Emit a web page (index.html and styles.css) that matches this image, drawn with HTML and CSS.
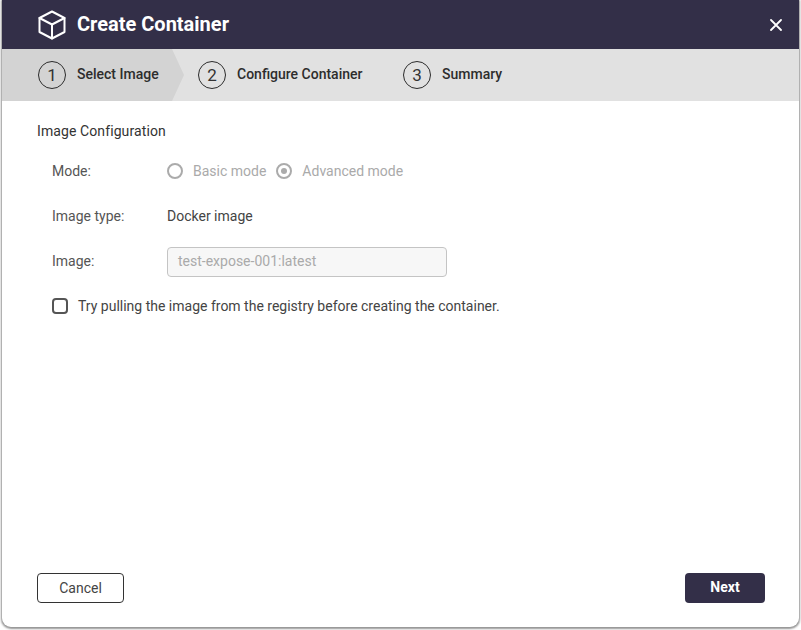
FILE: index.html
```html
<!DOCTYPE html>
<html lang="en">
<head>
<meta charset="utf-8">
<title>Create Container</title>
<link rel="stylesheet" href="styles.css">
</head>
<body>
<div class="dialog">
  <header class="titlebar">
    <svg class="cube" width="30" height="30" viewBox="0 0 30 30" fill="none" stroke="#fff" stroke-width="2" stroke-linejoin="round" stroke-linecap="round">
      <path d="M15 1.5 L27.5 8 V22 L15 28.5 L2.5 22 V8 Z"/>
      <path d="M2.5 8 L15 14.5 L27.5 8 M15 14.5 V28.5"/>
    </svg>
    <h1 class="title">Create Container</h1>
    <svg class="close" width="12" height="12" viewBox="0 0 12 12" stroke="#fff" stroke-width="1.8" stroke-linecap="round">
      <path d="M1 1 L11 11 M11 1 L1 11"/>
    </svg>
  </header>
  <nav class="steps">
    <div class="step step-active"><span class="num">1</span><span class="step-label">Select Image</span></div>
    <div class="step step-two"><span class="num">2</span><span class="step-label">Configure Container</span></div>
    <div class="step step-three"><span class="num">3</span><span class="step-label">Summary</span></div>
  </nav>
  <main class="content">
    <h2 class="section">Image Configuration</h2>
    <div class="form">
      <div class="row row-mode">
        <span class="label">Mode:</span>
        <span class="radio"></span><span class="muted basic">Basic mode</span>
        <span class="radio radio-on"></span><span class="muted">Advanced mode</span>
      </div>
      <div class="row row-type">
        <span class="label">Image type:</span>
        <span class="value">Docker image</span>
      </div>
      <div class="row row-image">
        <span class="label">Image:</span>
        <div class="input">test-expose-001:latest</div>
      </div>
      <div class="row row-check">
        <span class="checkbox"></span>
        <span class="value">Try pulling the image from the registry before creating the container.</span>
      </div>
    </div>
  </main>
  <footer class="actions">
    <button class="btn btn-cancel">Cancel</button>
    <button class="btn btn-next">Next</button>
  </footer>
</div>
</body>
</html>
```

FILE: styles.css
```css
* { box-sizing: border-box; }
html, body { margin: 0; height: 100%; background: #fff; overflow: hidden; }
body { font-family: Roboto, "Liberation Sans", sans-serif; font-size: 14px; color: #444; }

.dialog {
  width: 797px;
  height: 627px;
  margin-left: 2px;
  display: flex;
  flex-direction: column;
  background: #fff;
  border-radius: 0 0 9px 9px;
  box-shadow: 0 1px 2px 1px rgba(0,0,0,.42);
  overflow: hidden;
}

.titlebar {
  height: 49px;
  flex: none;
  display: flex;
  align-items: center;
  background: #332f48;
  padding: 0 17px 0 35px;
}
.cube { flex: none; }
.title { margin: 0 0 2px 10px; font-size: 20px; line-height: 24px; font-weight: 700; color: #fff; flex: 1; }

.steps {
  height: 52px;
  flex: none;
  display: flex;
  align-items: center;
  background: #e1e1e1;
  color: #2d2d2d;
}
.step {
  height: 100%;
  display: flex;
  align-items: center;
  gap: 11px;
  font-weight: 500;
  font-size: 14px;
}
.step-label { margin-bottom: 2px; }
.step-active {
  width: 182px;
  padding-left: 36px;
  background: #d3d3d3;
  clip-path: polygon(0 0, 170px 0, 182px 50%, 170px 100%, 0 100%);
}
.step-two { margin-left: 14px; width: 205px; }
.num {
  width: 28px;
  height: 28px;
  flex: none;
  display: flex;
  align-items: center;
  justify-content: center;
  padding-bottom: 1px;
  border: 1.5px solid #2b2b2b;
  border-radius: 50%;
  font-size: 17px;
  font-weight: 400;
  color: #333;
}

.content { flex: 1; padding: 21px 35px 0; }
.section { margin: 0; font-size: 14px; font-weight: 400; line-height: 18px; color: #333; letter-spacing: .1px; }
.form { padding-left: 15px; }
.row { display: flex; align-items: center; height: 20px; }
.row-mode { margin-top: 21px; }
.row-type { margin-top: 25px; }
.row-image { margin-top: 21px; height: 30px; }
.row-image .label { margin-bottom: 2px; }
.row-check { margin-top: 19px; }
.label { width: 115px; flex: none; color: #555; }
.value { color: #444; }
.muted { color: #aaa; }
.basic { margin-right: 10px; }

.radio {
  width: 16px;
  height: 16px;
  flex: none;
  margin-right: 10px;
  border: 2px solid #ababab;
  border-radius: 50%;
  display: flex;
  align-items: center;
  justify-content: center;
}
.radio-on::after {
  content: "";
  width: 6px;
  height: 6px;
  border-radius: 50%;
  background: #ababab;
}

.input {
  width: 280px;
  height: 30px;
  padding: 0 10px 2px;
  display: flex;
  align-items: center;
  border: 1px solid #c4c4c4;
  border-radius: 4px;
  background: #f7f7f7;
  color: #aaa;
}

.checkbox {
  width: 16px;
  height: 16px;
  flex: none;
  margin-right: 10px;
  border: 2px solid #555;
  border-radius: 4px;
}

.actions {
  flex: none;
  display: flex;
  justify-content: space-between;
  padding: 0 34px 24px 35px;
}
.btn {
  height: 30px;
  border-radius: 4px;
  font-family: inherit;
  font-size: 14px;
  padding: 0 0 1px;
}
.btn-cancel { width: 87px; background: #fff; border: 1px solid #333; color: #444; }
.btn-next { width: 80px; background: #332f48; border: 0; color: #fff; font-weight: 700; padding-bottom: 2px; }
```
